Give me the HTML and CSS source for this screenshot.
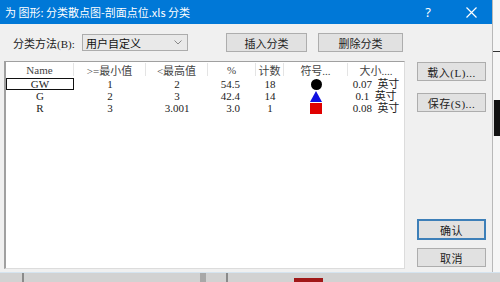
FILE: index.html
```html
<!DOCTYPE html>
<html lang="zh-CN">
<head>
    <meta charset="UTF-8">
    <title>分类</title>
    <link rel="stylesheet" href="styles.css">
</head>
<body>
    <div class="window">
        <div class="titlebar">
            <span class="title">为 图形: 分类散点图-剖面点位.xls 分类</span>
            <span class="cap-btn help">?</span>
            <span class="cap-btn close">
                <svg width="11" height="11" viewBox="0 0 11 11"><path d="M0.5 0.5 L10.5 10.5 M10.5 0.5 L0.5 10.5" stroke="#fff" stroke-width="1.2"/></svg>
            </span>
        </div>

        <div class="dialog">
            <div class="toolbar">
                <span class="label">分类方法(B):</span>
                <div class="select">
                    <span>用户自定义</span>
                    <svg width="8" height="5" viewBox="0 0 8 5"><path d="M0.5 0.5 L4 4 L7.5 0.5" fill="none" stroke="#888" stroke-width="1"/></svg>
                </div>
                <button class="btn insert">插入分类</button>
                <button class="btn delete">删除分类</button>
            </div>

            <div class="main">
                <div class="listbox">
                    <div class="grid header">
                        <div class="cell">Name</div>
                        <div class="cell">&gt;=最小值</div>
                        <div class="cell">&lt;最高值</div>
                        <div class="cell">%</div>
                        <div class="cell">计数</div>
                        <div class="cell">符号...</div>
                        <div class="cell last">大小....</div>
                    </div>
                    <div class="grid row">
                        <div class="cell selected">GW</div>
                        <div class="cell">1</div>
                        <div class="cell">2</div>
                        <div class="cell pct">54.5</div>
                        <div class="cell">18</div>
                        <div class="cell"><span class="sym circle"></span></div>
                        <div class="cell size">0.07&nbsp;&nbsp;英寸</div>
                    </div>
                    <div class="grid row">
                        <div class="cell">G</div>
                        <div class="cell">2</div>
                        <div class="cell">3</div>
                        <div class="cell pct">42.4</div>
                        <div class="cell">14</div>
                        <div class="cell"><span class="sym triangle"></span></div>
                        <div class="cell size">0.1&nbsp;&nbsp;英寸</div>
                    </div>
                    <div class="grid row">
                        <div class="cell">R</div>
                        <div class="cell">3</div>
                        <div class="cell">3.001</div>
                        <div class="cell pct">3.0</div>
                        <div class="cell">1</div>
                        <div class="cell"><span class="sym square"></span></div>
                        <div class="cell size">0.08&nbsp;&nbsp;英寸</div>
                    </div>
                </div>

                <div class="side-buttons">
                    <div class="group top">
                        <button class="btn side">载入(L)...</button>
                        <button class="btn side">保存(S)...</button>
                    </div>
                    <div class="group bottom">
                        <button class="btn side default">确认</button>
                        <button class="btn side">取消</button>
                    </div>
                </div>
            </div>
        </div>
    </div>

    <div class="desk-strip">
        <div class="strip-line"></div>
        <div class="strip-black"></div>
    </div>

    <div class="taskbar">
        <span class="tb-sep s1"></span>
        <span class="tb-sep s2"></span>
        <span class="tb-sep s3"></span>
        <span class="tb-red"></span>
    </div>
    <div class="taskbar-rest"></div>
</body>
</html>
```

FILE: styles.css
```css
* {
    margin: 0;
    padding: 0;
    box-sizing: border-box;
    font-family: "Liberation Serif", "Noto Sans CJK SC", serif;
}

body {
    width: 500px;
    height: 282px;
    overflow: hidden;
    display: grid;
    grid-template-columns: 493px 7px;
    grid-template-rows: 272px 10px;
    background-color: #f4f4f4;
}

.window {
    display: flex;
    flex-direction: column;
    border-right: 1px solid #b8b8b8;
    background-color: #f0f0f0;
}

.titlebar {
    height: 24px;
    background-color: #0078d7;
    color: white;
    display: flex;
    align-items: center;
    padding-left: 5px;
}

.title {
    font-family: "Noto Sans CJK SC", sans-serif;
    font-size: 11px;
    flex: 1;
    white-space: nowrap;
}

.cap-btn {
    height: 24px;
    display: flex;
    align-items: center;
    justify-content: center;
    font-family: "Noto Sans", sans-serif;
    font-size: 13px;
}

.cap-btn.help {
    width: 46px;
}

.cap-btn.close {
    width: 41px;
}

.dialog {
    flex: 1;
    padding: 9px 6px 3px 4px;
    display: flex;
    flex-direction: column;
    gap: 9px;
}

.toolbar {
    height: 19px;
    display: flex;
    align-items: center;
}

.label {
    font-size: 11px;
    color: #222;
    margin-left: 9px;
    width: 69px;
    white-space: nowrap;
}

.select {
    width: 106px;
    height: 17px;
    border: 1px solid #acacac;
    background-color: #e9e9e9;
    display: flex;
    align-items: center;
    justify-content: space-between;
    padding: 0 5px 0 3px;
    font-size: 11px;
    color: #111;
}

.btn {
    height: 19px;
    border: 1px solid #adadad;
    background-color: #e1e1e1;
    font-size: 11px;
    color: #222;
}

.btn.insert {
    width: 81px;
    margin-left: 38px;
}

.btn.delete {
    width: 85px;
    margin-left: 11px;
}

.main {
    flex: 1;
    display: flex;
    gap: 12px;
}

.listbox {
    width: 401px;
    background-color: white;
    border-left: 2px solid #a0a0a0;
    border-top: 1px solid #a0a0a0;
    border-bottom: 1px solid #dcdcdc;
    border-right: 1px solid #dcdcdc;
}

.grid {
    display: grid;
    grid-template-columns: 68px 72px 62px 48px 28px 64px 56px;
}

.cell {
    text-align: center;
    font-size: 11px;
    color: #222;
    white-space: nowrap;
    display: flex;
    align-items: center;
    justify-content: center;
}

.header {
    height: 15px;
    margin-top: 1px;
}

.header .cell {
    color: #444;
    border-right: 1px solid #e4e4e4;
    height: 13px;
}

.header .cell.last {
    border-right: none;
}

.row {
    height: 12px;
}

.row .cell {
    height: 12px;
    line-height: 12px;
}

.row .cell.pct {
    justify-content: flex-end;
    padding-right: 16px;
}

.row .cell.size {
    display: block;
    text-align: center;
}

.cell.selected {
    border: 1px solid #111;
}

.sym {
    display: block;
}

.sym.circle {
    width: 11px;
    height: 11px;
    border-radius: 50%;
    background-color: #000;
}

.sym.triangle {
    width: 0;
    height: 0;
    border-left: 6px solid transparent;
    border-right: 6px solid transparent;
    border-bottom: 11px solid #1010e0;
}

.sym.square {
    width: 12px;
    height: 11px;
    background-color: #e00000;
}

.side-buttons {
    flex: 1;
    display: flex;
    flex-direction: column;
    justify-content: space-between;
    padding: 1px 0 1px 0;
}

.group {
    display: flex;
    flex-direction: column;
}

.group.top {
    gap: 12px;
}

.group.bottom {
    gap: 8px;
    margin-bottom: 1px;
}

.btn.side {
    width: 69px;
    height: 19px;
    font-size: 11px;
    letter-spacing: 0.5px;
}

.btn.side.default {
    height: 21px;
    border: 2px solid #3d7fb8;
}

.desk-strip {
    background-color: #f6f6f6;
    display: flex;
    flex-direction: column;
}

.strip-line {
    height: 1px;
    margin-top: 51px;
    background-color: #333;
}

.strip-black {
    height: 36px;
    margin-top: 48px;
    background-color: #111;
    border-left: 1px solid #e0e0e0;
}

.taskbar {
    background-color: #d2d2d2;
    border-top: 1px solid #d5e4f0;
    display: flex;
    align-items: stretch;
}

.tb-sep {
    width: 2px;
    background-color: #8a8a8a;
}

.tb-sep.s1 {
    margin-left: 22px;
}

.tb-sep.s2 {
    margin-left: 176px;
    width: 6px;
    background-color: #a8a8a8;
}

.tb-sep.s3 {
    margin-left: 20px;
}

.tb-red {
    width: 29px;
    height: 4px;
    align-self: flex-end;
    margin-left: 66px;
    background-color: #a01818;
}

.taskbar-rest {
    background-color: #d2d2d2;
    border-top: 1px solid #d5e4f0;
}
```
